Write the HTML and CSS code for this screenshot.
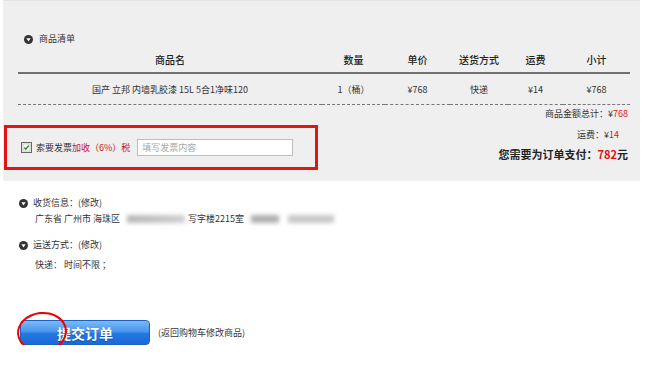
FILE: index.html
```html
<!DOCTYPE html>
<html>
<head>
    <title>确认订单</title>
    <meta charset="UTF-8">
    <meta name="viewport" content="width=device-width, initial-scale=1.0">
    <link rel="stylesheet" href="styles.css">
</head>
<body>
    <div class="cart">
        <div class="sec-title cart-title">
            <svg class="dot" width="9" height="9" viewBox="0 0 9 9"><circle cx="4.5" cy="4.5" r="4.5" fill="#333"/><polygon points="2.3,3.3 6.7,3.3 4.5,6.6" fill="#fff"/></svg>
            商品清单
        </div>
        <table class="goods">
            <thead>
                <tr><th class="c-name">商品名</th><th class="c-qty">数量</th><th class="c-price">单价</th><th class="c-ship">送货方式</th><th class="c-fee">运费</th><th class="c-sub">小计</th></tr>
            </thead>
            <tbody>
                <tr><td>国产 立邦 内墙乳胶漆 15L 5合1净味120</td><td>1（桶）</td><td>¥768</td><td>快递</td><td>¥14</td><td>¥768</td></tr>
            </tbody>
        </table>
        <div class="sum">商品金额总计：¥<em>768</em></div>
        <div class="pay-row">
            <div class="invoice">
                <svg class="check" width="11" height="11" viewBox="0 0 11 11"><rect x="0.5" y="0.5" width="10" height="10" fill="#f4f4f4" stroke="#666"/><rect x="2" y="2" width="7" height="7" fill="#fff" stroke="#aaa" stroke-width="0.6"/><polyline points="3.2,5.6 4.8,7.2 7.8,3.6" fill="none" stroke="#2b9a2b" stroke-width="1.5"/></svg>
                <span>索要发票</span><span class="red">加收（6%）税</span>
                <input type="text" class="invoice-input" placeholder="填写发票内容">
            </div>
            <div class="totals">
                <div class="fee">运费：¥<em>14</em></div>
                <div class="grand">您需要为订单支付：<em>782</em>元</div>
            </div>
        </div>
    </div>

    <div class="info">
        <div class="sec-title">
            <svg class="dot" width="9" height="9" viewBox="0 0 9 9"><circle cx="4.5" cy="4.5" r="4.5" fill="#333"/><polygon points="2.3,3.3 6.7,3.3 4.5,6.6" fill="#fff"/></svg>
            收货信息：(修改)
        </div>
        <div class="line">广东省 广州市 海珠区<span class="blur b1"></span>写字楼2215室<span class="blur b2"></span><span class="blur b3"></span></div>

        <div class="sec-title ship-title">
            <svg class="dot" width="9" height="9" viewBox="0 0 9 9"><circle cx="4.5" cy="4.5" r="4.5" fill="#333"/><polygon points="2.3,3.3 6.7,3.3 4.5,6.6" fill="#fff"/></svg>
            运送方式：(修改)
        </div>
        <div class="line ship-line">快递： 时间不限 ；</div>
    </div>

    <div class="actions">
        <div class="btn-wrap">
            <button class="submit">提交订单</button>
            <span class="circle"></span>
        </div>
        <span class="back">(返回购物车修改商品)</span>
    </div>
</body>
</html>
```

FILE: styles.css
```css
body {
  margin: 0;
  font-family: "Noto Sans CJK SC", "Liberation Sans", sans-serif;
  font-size: 9px;
  color: #333;
  background-color: #fff;
}

em {
  font-style: normal;
  color: #d42020;
}

.cart {
  margin-left: 3px;
  width: 637px;
  background-color: #efefef;
  border-top: 1px solid #e4e4e4;
  padding: 30px 0 11px;
}

.sec-title {
  display: flex;
  align-items: center;
  height: 16px;
  line-height: 16px;
  padding-left: 19px;
}

.sec-title .dot {
  margin-right: 5px;
}

.cart-title {
  padding-left: 21px;
}

.cart-title .dot {
  margin-right: 6px;
}

.goods {
  margin: 0 0 0 15px;
  width: 612px;
  border-collapse: collapse;
  table-layout: fixed;
}

.goods th {
  height: 25px;
  padding: 0;
  font-size: 10px;
  font-weight: 500;
  color: #222;
  border-bottom: 2px solid #707070;
  text-align: center;
}

.goods td {
  height: 30px;
  padding: 0;
  text-align: center;
  border-bottom: 1px dashed #777;
}

.c-name { width: 304px; }
.c-qty { width: 63px; }
.c-price { width: 65px; }
.c-ship { width: 58px; }
.c-fee { width: 55px; }
.c-sub { width: 67px; }

.sum {
  text-align: right;
  line-height: 18px;
  padding-right: 12px;
}

.pay-row {
  display: flex;
  justify-content: space-between;
  margin-top: 2px;
}

.invoice {
  display: flex;
  align-items: center;
  margin-left: 1px;
  width: 294px;
  height: 39px;
  padding-left: 14px;
  border: 3px solid #e01515;
}

.check {
  margin-right: 4px;
}

.red {
  color: #c81818;
}

.invoice-input {
  margin-left: 7px;
  width: 156px;
  height: 17px;
  box-sizing: border-box;
  padding: 0 4px;
  border: 1px solid #bdbdbd;
  background-color: #fff;
  font-family: inherit;
  font-size: 9px;
  color: #333;
}

.invoice-input::placeholder {
  color: #a8a8a8;
}

.totals {
  text-align: right;
  padding-right: 12px;
}

.fee {
  line-height: 20px;
  padding-right: 9px;
}

.fee em {
  color: #d01818;
}

.grand {
  line-height: 18px;
  font-size: 11px;
  font-weight: bold;
  color: #222;
}

.grand em {
  color: #e01010;
}

.info {
  margin-top: 14px;
}

.line {
  line-height: 16px;
  padding-left: 35px;
  display: flex;
  align-items: center;
  white-space: pre;
}

.blur {
  display: inline-block;
  height: 8px;
  filter: blur(2px);
}

.b1 {
  width: 58px;
  margin: 0 3px 0 7px;
  background: linear-gradient(90deg, #b8b8b8, #c4c4c4 60%, #d0d0d0);
}

.b2 {
  width: 28px;
  margin-left: 7px;
  background-color: #b0b0b0;
}

.b3 {
  width: 46px;
  margin-left: 9px;
  background-color: #c8c8c8;
}

.ship-title {
  margin-top: 10px;
}

.ship-line {
  margin-top: 4px;
}

.actions {
  display: flex;
  align-items: center;
  margin-top: 47px;
  padding-left: 20px;
}

.btn-wrap {
  position: relative;
}

.submit {
  display: block;
  width: 130px;
  height: 25px;
  border: 1px solid #1c62c4;
  border-radius: 4px;
  background: linear-gradient(#7dbaf8 0%, #4796ee 45%, #2478e2 55%, #1a6ad6 100%);
  color: #fff;
  font-family: inherit;
  font-size: 14px;
  font-weight: bold;
  text-shadow: 0 1px 1px rgba(0, 0, 0, 0.3);
  cursor: pointer;
  padding: 0;
}

.circle {
  position: absolute;
  left: -3px;
  top: -8px;
  width: 46px;
  height: 36px;
  border: 2px solid #e00;
  border-radius: 50%;
  transform: rotate(-6deg);
}

.back {
  margin-left: 8px;
  color: #333;
}
```
